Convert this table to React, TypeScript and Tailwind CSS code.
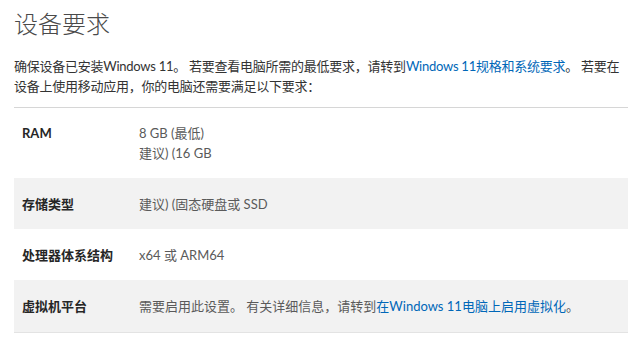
const rows = [
  { label: 'RAM', lines: ['8 GB (最低)', '建议) (16 GB'] },
  { label: '存储类型', lines: ['建议) (固态硬盘或 SSD'] },
  { label: '处理器体系结构', lines: ['x64 或 ARM64'] },
];

export default function App() {
  return (
    <div className="min-h-screen bg-white pl-[14px] pr-[6px] font-['Lato','Noto_Sans_CJK_SC',sans-serif] text-[#333]">
      <h1 className="pt-[8px] text-[24px] leading-[32px] font-light text-[#4a4a4a]">设备要求</h1>

      <div className="mt-[16px] text-[13px] leading-5 tracking-[-0.25px] text-[#333]">
        <p className="whitespace-nowrap">
          确保设备已安装Windows 11。 若要查看电脑所需的最低要求，请转到
          <a className="text-[#0067b8]">Windows 11规格和系统要求</a>。 若要在
        </p>
        <p className="whitespace-nowrap">设备上使用移动应用，你的电脑还需要满足以下要求：</p>
      </div>

      <div className="mt-[11px] border-t border-[#d6d6d6] border-b border-b-[#e3e3e3] text-[13px] leading-5">
        {rows.map((row, i) => (
          <div
            key={row.label}
            className={`flex ${i === 0 ? 'py-[15px]' : 'h-[51px] items-center'} ${i % 2 === 1 ? 'bg-[#f2f2f2]' : 'bg-white'}`}
          >
            <div className="w-[125px] shrink-0 pl-[8px] font-bold text-[#262626]">{row.label}</div>
            <div className="text-[#5a5a5a]">
              {row.lines.map((l) => (
                <div key={l}>{l}</div>
              ))}
            </div>
          </div>
        ))}
        <div className="flex h-[52px] items-center bg-[#f2f2f2]">
          <div className="w-[125px] shrink-0 pl-[8px] font-bold text-[#262626]">虚拟机平台</div>
          <div className="text-[#5a5a5a]">
            需要启用此设置。 有关详细信息，请转到<a className="text-[#0067b8]">在Windows 11电脑上启用虚拟化</a>。
          </div>
        </div>
      </div>
    </div>
  );
}
